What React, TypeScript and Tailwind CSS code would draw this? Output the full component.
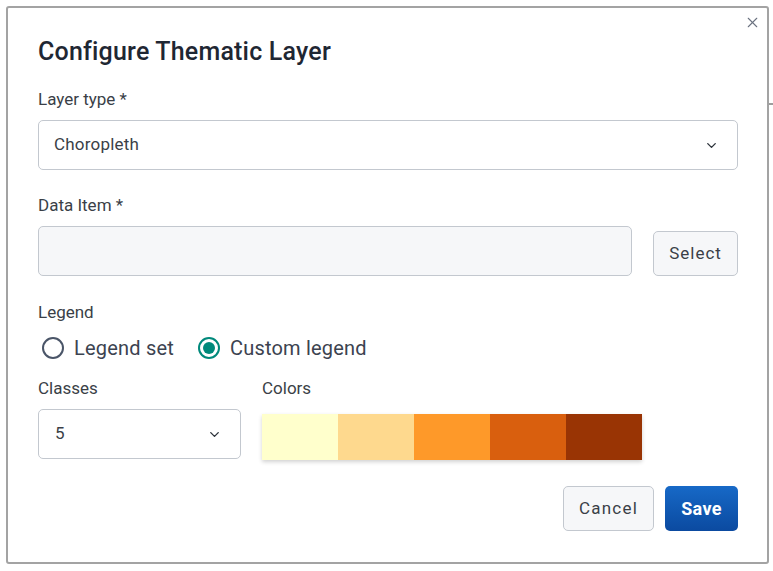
import React from 'react';
import { X, ChevronDown } from 'lucide-react';

const colors = ['#ffffcc', '#fed98e', '#fe9929', '#d95f0e', '#993404'];

function Radio({ label, checked }: { label: string; checked?: boolean }) {
  return (
    <label className="flex items-center gap-[10px]">
      {checked ? (
        <span className="w-[22px] h-[22px] rounded-full border-2 border-[#00897b] flex items-center justify-center">
          <span className="w-[12px] h-[12px] rounded-full bg-[#00897b]" />
        </span>
      ) : (
        <span className="w-[22px] h-[22px] rounded-full border-2 border-[#4a5568]" />
      )}
      <span className="text-[20px] tracking-[0.2px] text-[#3c4350]">{label}</span>
    </label>
  );
}

export default function App() {
  return (
    <div className="relative w-[773px] h-[571px] bg-white pt-[6px] pl-[6px] font-['Roboto',sans-serif]">
      <div className="absolute right-0 top-[103px] w-[4px] h-[2px] bg-[#9e9e9e]" />
      <div className="absolute left-[6px] top-[360px] w-[2px] h-[9px] bg-[#111]" />
      <div className="relative w-[763px] h-[558px] border-2 border-[#a3a3a3] rounded-[3px] bg-white pl-[30px] pr-[29px] pt-[28px] flex flex-col">
        <button className="absolute right-[6px] top-[6px] text-[#6b7280]">
          <X size={17} strokeWidth={1.5} />
        </button>
        <h2 className="text-[25px] leading-[32px] font-medium tracking-[0.2px] text-[#1f2733]">Configure Thematic Layer</h2>

        <div className="mt-[19px] text-[17px] leading-[24px] text-[#3a3f47]">Layer type *</div>
        <div className="mt-[9px] h-[50px] rounded-[5px] border border-[#c3c8cf] flex items-center justify-between pl-[15px] pr-[18px]">
          <span className="text-[17px] tracking-[0.2px] text-[#3a3f47]">Choropleth</span>
          <ChevronDown size={15} strokeWidth={2.2} className="text-[#2d333b]" />
        </div>

        <div className="mt-[23px] text-[17px] leading-[24px] text-[#3a3f47]">Data Item *</div>
        <div className="mt-[9px] flex items-end gap-[21px]">
          <div className="flex-1 h-[50px] rounded-[5px] border border-[#c3c8cf] bg-[#f6f7f9]" />
          <button className="w-[85px] h-[45px] rounded-[5px] border border-[#c3c8cf] bg-[#f6f7f9] text-[17px] tracking-[1px] text-[#3a3f47]">
            Select
          </button>
        </div>

        <div className="mt-[24px] text-[17px] leading-[24px] text-[#3a3f47]">Legend</div>
        <div className="mt-[10px] h-[28px] flex items-center gap-[24px] pl-[4px]">
          <Radio label="Legend set" />
          <Radio label="Custom legend" checked />
        </div>

        <div className="mt-[14px] flex gap-[21px]">
          <div className="w-[203px]">
            <div className="text-[17px] leading-[24px] text-[#3a3f47]">Classes</div>
            <div className="mt-[9px] h-[50px] rounded-[5px] border border-[#c3c8cf] flex items-center justify-between pl-[16px] pr-[18px]">
              <span className="text-[17px] text-[#3a3f47]">5</span>
              <ChevronDown size={15} strokeWidth={2.2} className="text-[#2d333b]" />
            </div>
          </div>
          <div>
            <div className="text-[17px] leading-[24px] text-[#3a3f47]">Colors</div>
            <div className="mt-[14px] flex shadow-[0_2px_4px_rgba(0,0,0,0.18)]">
              {colors.map((c) => (
                <div key={c} className="w-[76px] h-[46px]" style={{ backgroundColor: c }} />
              ))}
            </div>
          </div>
        </div>

        <div className="mt-[26px] flex justify-end gap-[11px]">
          <button className="w-[91px] h-[45px] rounded-[5px] border border-[#c3c8cf] bg-[#f6f7f9] text-[17px] tracking-[1.2px] text-[#3a3f47]">
            Cancel
          </button>
          <button className="w-[73px] h-[45px] rounded-[5px] bg-gradient-to-b from-[#1769c7] to-[#0b4aa0] text-[18px] font-bold tracking-[0.3px] text-white">
            Save
          </button>
        </div>
      </div>
    </div>
  );
}
